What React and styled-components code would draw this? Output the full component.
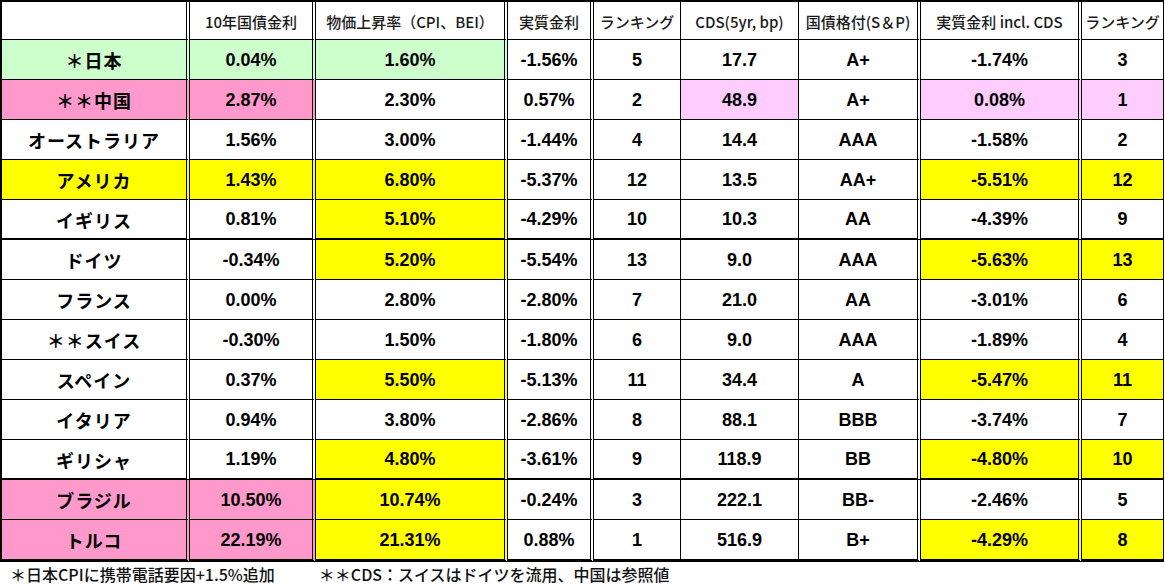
import React from "react";
import styled, { createGlobalStyle } from "styled-components";

const GlobalStyle = createGlobalStyle`
  html, body { margin: 0; padding: 0; background: #ffffff; }
  body { font-family: "Liberation Sans", "Noto Sans CJK JP", sans-serif; color: #000; }
`;

const COLS = "188px 126px 192px 86px 87px 118px 122px 161px 82px";
const SEPS = ["double", "double", "double", "double", "single", "single", "double", "double", "single"];

const BG = {
  G: "#ccffcc",
  P: "#ff99cc",
  L: "#ffccff",
  Y: "#ffff00",
};

const RULES = { thin: "1px solid #000", mid: "2px solid #000", thick: "3px solid #000" };

const Page = styled.div`
  width: 1165px;
  height: 585px;
  overflow: hidden;
  display: flex;
  flex-direction: column;
`;

const Grid = styled.div`
  display: grid;
  grid-template-columns: ${COLS};
  grid-template-rows: 38px repeat(12, 40px) 42px;
  border-left: 2px solid #000;
  border-top: 2px solid #000;
  width: max-content;
`;

const Cell = styled.div`
  box-sizing: border-box;
  display: flex;
  align-items: center;
  justify-content: center;
  background: ${(p) => p.$bg || "#ffffff"};
  border-right: ${(p) => (p.$sep === "double" ? "4px double #000" : "1px solid #000")};
  border-bottom: ${(p) => RULES[p.$rule]};
  font-size: 18px;
  font-weight: 700;
  white-space: nowrap;
  padding-top: 1px;
`;

const HeadCell = styled(Cell)`
  font-size: 15px;
  font-weight: 500;
  color: #1a1a1a;
  font-family: "Noto Sans CJK JP", sans-serif;
`;

const Country = styled(Cell)`
  font-family: "Noto Sans CJK JP", sans-serif;
  letter-spacing: 1px;
`;

const Notes = styled.div`
  display: flex;
  align-items: center;
  height: 23px;
  padding-left: 10px;
  gap: 44px;
  font-family: "Noto Sans CJK JP", sans-serif;
  font-size: 16px;
  font-weight: 500;
  color: #111;
`;

const Note = styled.span`
  white-space: nowrap;
`;

const HEADERS = [
  "",
  "10年国債金利",
  "物価上昇率（CPI、BEI）",
  "実質金利",
  "ランキング",
  "CDS(5yr, bp)",
  "国債格付(S＆P)",
  "実質金利 incl. CDS",
  "ランキング",
];

const ROWS = [
  { v: ["＊日本", "0.04%", "1.60%", "-1.56%", "5", "17.7", "A+", "-1.74%", "3"], c: { 0: "G", 1: "G", 2: "G" } },
  { v: ["＊＊中国", "2.87%", "2.30%", "0.57%", "2", "48.9", "A+", "0.08%", "1"], c: { 0: "P", 1: "P", 5: "L", 7: "L", 8: "L" } },
  { v: ["オーストラリア", "1.56%", "3.00%", "-1.44%", "4", "14.4", "AAA", "-1.58%", "2"], c: {} },
  { v: ["アメリカ", "1.43%", "6.80%", "-5.37%", "12", "13.5", "AA+", "-5.51%", "12"], c: { 0: "Y", 1: "Y", 2: "Y", 7: "Y", 8: "Y" } },
  { v: ["イギリス", "0.81%", "5.10%", "-4.29%", "10", "10.3", "AA", "-4.39%", "9"], c: { 2: "Y" }, r: "mid" },
  { v: ["ドイツ", "-0.34%", "5.20%", "-5.54%", "13", "9.0", "AAA", "-5.63%", "13"], c: { 2: "Y", 7: "Y", 8: "Y" } },
  { v: ["フランス", "0.00%", "2.80%", "-2.80%", "7", "21.0", "AA", "-3.01%", "6"], c: {} },
  { v: ["＊＊スイス", "-0.30%", "1.50%", "-1.80%", "6", "9.0", "AAA", "-1.89%", "4"], c: {} },
  { v: ["スペイン", "0.37%", "5.50%", "-5.13%", "11", "34.4", "A", "-5.47%", "11"], c: { 2: "Y", 7: "Y", 8: "Y" } },
  { v: ["イタリア", "0.94%", "3.80%", "-2.86%", "8", "88.1", "BBB", "-3.74%", "7"], c: {} },
  { v: ["ギリシャ", "1.19%", "4.80%", "-3.61%", "9", "118.9", "BB", "-4.80%", "10"], c: { 2: "Y", 7: "Y", 8: "Y" }, r: "mid" },
  { v: ["ブラジル", "10.50%", "10.74%", "-0.24%", "3", "222.1", "BB-", "-2.46%", "5"], c: { 0: "P", 1: "P", 2: "Y" } },
  { v: ["トルコ", "22.19%", "21.31%", "0.88%", "1", "516.9", "B+", "-4.29%", "8"], c: { 0: "P", 1: "P", 2: "Y", 7: "Y", 8: "Y" }, r: "thick" },
];

export default function App() {
  return (
    <>
      <GlobalStyle />
      <Page>
        <Grid>
          {HEADERS.map((h, i) => (
            <HeadCell key={"h" + i} $sep={SEPS[i]} $rule="thin">
              {h}
            </HeadCell>
          ))}
          {ROWS.map((row, ri) =>
            row.v.map((val, ci) => {
              const props = {
                key: ri + "-" + ci,
                $sep: SEPS[ci],
                $rule: row.r || "thin",
                $bg: row.c[ci] ? BG[row.c[ci]] : undefined,
              };
              return ci === 0 ? (
                <Country {...props}>{val}</Country>
              ) : (
                <Cell {...props}>{val}</Cell>
              );
            })
          )}
        </Grid>
        <Notes>
          <Note>＊日本CPIに携帯電話要因+1.5%追加</Note>
          <Note>＊＊CDS：スイスはドイツを流用、中国は参照値</Note>
        </Notes>
      </Page>
    </>
  );
}
